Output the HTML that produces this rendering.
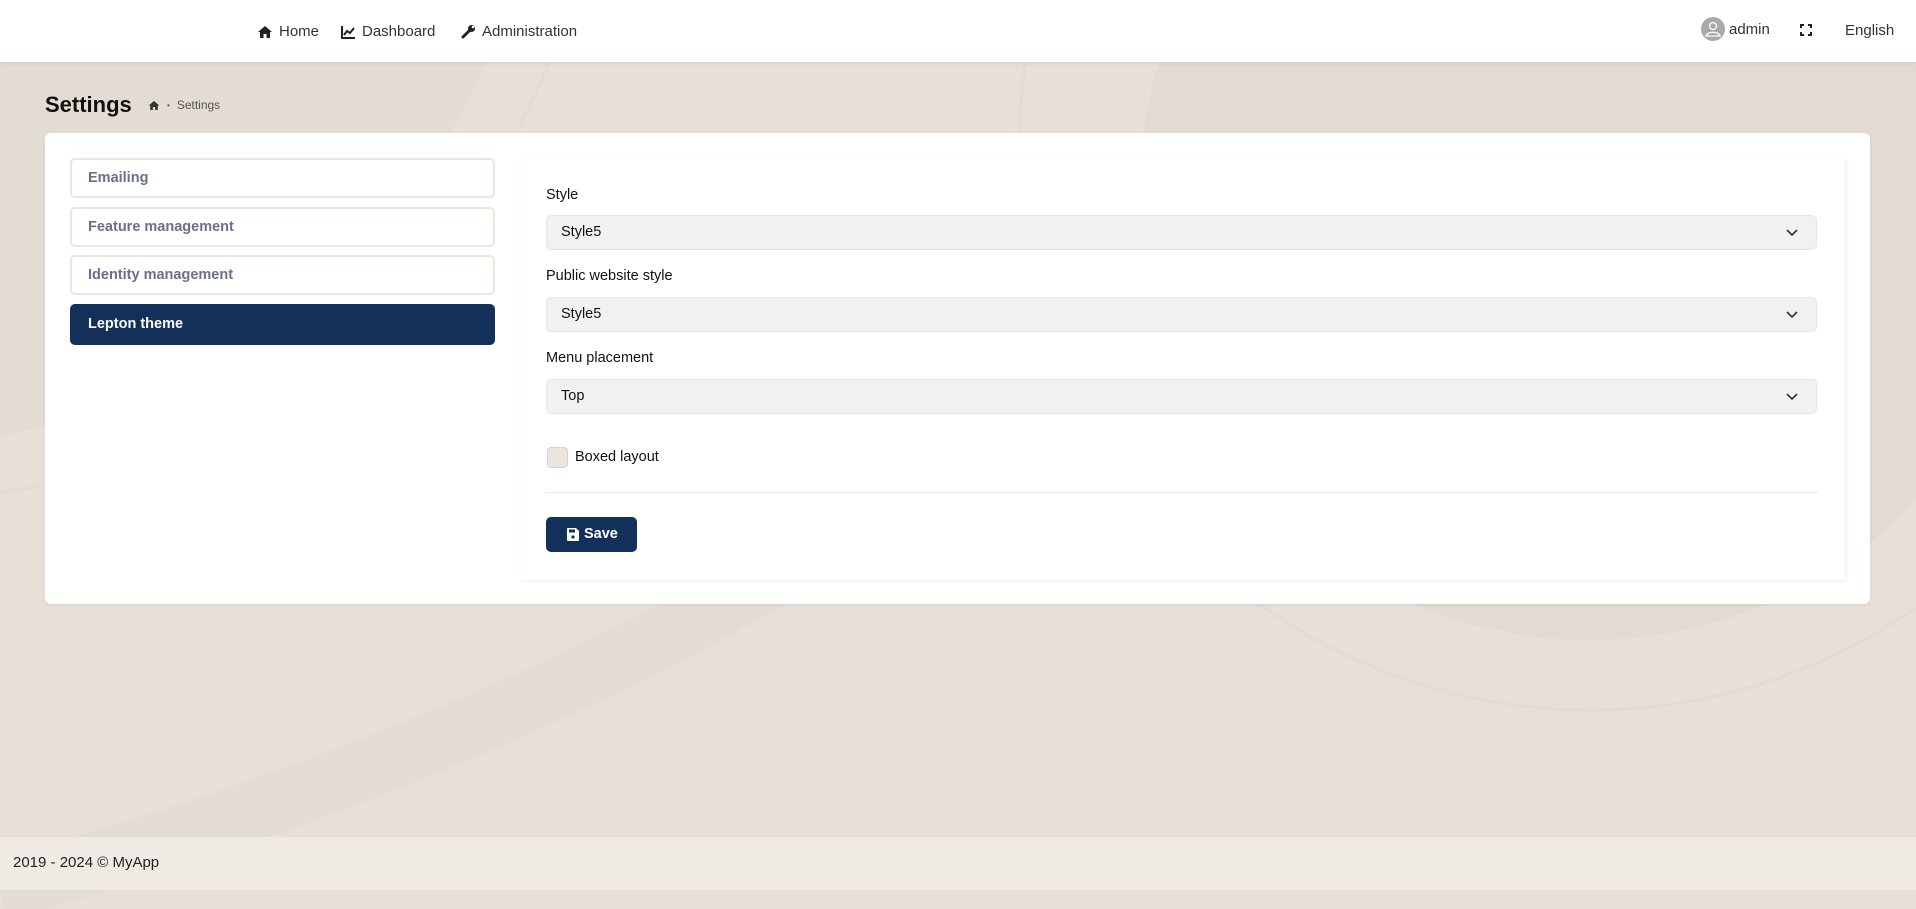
<!DOCTYPE html>
<html><head><meta charset="utf-8"><style>
*{box-sizing:border-box;margin:0;padding:0}
body{width:1916px;height:909px;overflow:hidden;background:#e8e0d7;font-family:"Liberation Sans",sans-serif;position:relative;color:#222}
.bg{position:absolute;left:0;top:0;width:1916px;height:909px;overflow:hidden}
.hdr{position:absolute;left:0;top:0;width:1916px;height:62px;background:#fff;box-shadow:0 1px 4px rgba(0,0,0,.08);z-index:2}
.nav{position:absolute;top:22px;font-size:15px;color:#333;display:flex;align-items:center;gap:6px}
.title{position:absolute;left:45px;top:92px;font-size:22px;font-weight:bold;color:#111}
.bc{position:absolute;left:148px;top:98px;font-size:12px;color:#555;display:flex;align-items:center;gap:7px}
.card{position:absolute;left:45px;top:133px;width:1825px;height:471px;background:#fff;border-radius:6px;box-shadow:0 1px 3px rgba(0,0,0,.08)}
.item{position:absolute;left:70px;width:425px;height:40px;border:2px solid #ebe5da;border-radius:5px;font-size:14.5px;font-weight:bold;color:#6a6f8c;padding:10px 0 0 16px}
.item.act{background:#12305a;border-color:#12305a;color:#fff}
.panel{position:absolute;left:521px;top:158px;width:1324px;height:422px;box-shadow:1px 1px 3px rgba(0,0,0,.08);background:#fff}
.lbl{position:absolute;left:546px;font-size:14.5px;color:#111}
.sel{position:absolute;left:546px;width:1271px;height:35px;background:#f1f1f1;border:1px solid #e6e6e6;border-radius:5px;font-size:14.5px;color:#111;padding:8px 0 0 14px}
.sel svg{position:absolute;right:18px;top:13px}
.foot{position:absolute;left:0;top:837px;width:1916px;height:53px;background:#efeae4;font-size:15px;color:#222;padding:17px 0 0 13px}
</style></head><body>
<svg class="bg" width="1916" height="909">
<circle cx="-100" cy="-200" r="643" fill="#e3dcd3"/>
<circle cx="-100" cy="-200" r="700" fill="none" stroke="#e3dcd3" stroke-width="3"/>
<circle cx="1590" cy="190" r="450" fill="#e2dbd2"/>
<circle cx="1590" cy="140" r="570" fill="none" stroke="#e3dcd3" stroke-width="3"/>
<path d="M1290 62 C1280 120 1270 150 1260 200" stroke="#e2dbd2" stroke-width="30" fill="none"/>
<path d="M0 890 C400 780 800 600 1060 380" stroke="#e3dcd3" stroke-width="60" fill="none"/>
</svg>
<div class="hdr">
<div class="nav" style="left:257px;top:23px"><svg width="16" height="14" viewBox="0 0 16 14"><path d="M8 1 L1 7 H3 V13 H6.5 V9 H9.5 V13 H13 V7 H15 Z" fill="#222"/></svg>Home</div>
<div class="nav" style="left:341px;top:23px"><svg width="15" height="14" viewBox="0 0 15 14"><path d="M1 1 V13 H14" stroke="#222" stroke-width="2" fill="none"/><path d="M3 10 L6 6 L9 8 L13 3" stroke="#222" stroke-width="2" fill="none"/></svg>Dashboard</div>
<div class="nav" style="left:461px;top:23px"><svg width="15" height="15" viewBox="0 0 15 15"><path d="M2 13 L8 7" stroke="#222" stroke-width="3" stroke-linecap="round"/><circle cx="10.5" cy="4.5" r="3.5" fill="#222"/><circle cx="12" cy="3" r="1.3" fill="#fff"/></svg>Administration</div>
<div class="nav" style="left:1701px;top:17px"><svg width="24" height="24" viewBox="0 0 24 24"><circle cx="12" cy="12" r="12" fill="#a9a9a9"/><circle cx="12" cy="9" r="3.5" fill="none" stroke="#fff" stroke-width="1.3"/><path d="M5 19 C6 14 18 14 19 19 Z" fill="none" stroke="#fff" stroke-width="1.3"/></svg><span style="margin-left:-2px">admin</span></div>
<div class="nav" style="left:1800px;top:24px"><svg width="12" height="12" viewBox="0 0 12 12" fill="none" stroke="#222" stroke-width="2"><path d="M1 4V1H4M8 1H11V4M11 8V11H8M4 11H1V8"/></svg></div>
<div class="nav" style="left:1845px">English</div>
</div>
<div class="title">Settings</div>
<div class="bc"><svg width="12" height="11" viewBox="0 0 16 14"><path d="M8 1 L1 7 H3 V13 H6.5 V9 H9.5 V13 H13 V7 H15 Z" fill="#333"/></svg><span style="font-size:8px">•</span>Settings</div>
<div class="card"></div>
<div class="item" style="top:158px">Emailing</div>
<div class="item" style="top:207px">Feature management</div>
<div class="item" style="top:255px">Identity management</div>
<div class="item act" style="top:304px;height:41px">Lepton theme</div>
<div class="panel"></div>
<div class="lbl" style="top:187px">Style</div>
<div class="sel" style="top:215px">Style5<svg width="12" height="8"><path d="M1 1L6 6L11 1" stroke="#333" stroke-width="1.6" fill="none"/></svg></div>
<div class="lbl" style="top:268px">Public website style</div>
<div class="sel" style="top:297px">Style5<svg width="12" height="8"><path d="M1 1L6 6L11 1" stroke="#333" stroke-width="1.6" fill="none"/></svg></div>
<div class="lbl" style="top:350px">Menu placement</div>
<div class="sel" style="top:379px">Top<svg width="12" height="8"><path d="M1 1L6 6L11 1" stroke="#333" stroke-width="1.6" fill="none"/></svg></div>
<div style="position:absolute;left:547px;top:447px;width:21px;height:21px;background:#ebe6df;border:1px solid #d8d2ca;border-radius:4px"></div>
<div class="lbl" style="left:575px;top:449px">Boxed layout</div>
<div style="position:absolute;left:546px;top:492px;width:1272px;height:1px;background:#ebebeb"></div>
<div style="position:absolute;left:546px;top:517px;width:91px;height:35px;background:#12305a;border-radius:5px;color:#fff;font-size:14.5px;font-weight:bold;padding:9px 0 0 20px"><svg width="12" height="13" viewBox="0 0 12 13" style="position:absolute;left:21px;top:11px"><path d="M0 1Q0 0 1 0H9L12 3V12Q12 13 11 13H1Q0 13 0 12Z" fill="#fff"/><rect x="2" y="1.5" width="6" height="3" fill="#12305a"/><circle cx="6" cy="9" r="1.6" fill="#12305a"/></svg><span style="margin-left:18px">Save</span></div>
<div class="foot">2019 - 2024 © MyApp</div>
</body></html>
